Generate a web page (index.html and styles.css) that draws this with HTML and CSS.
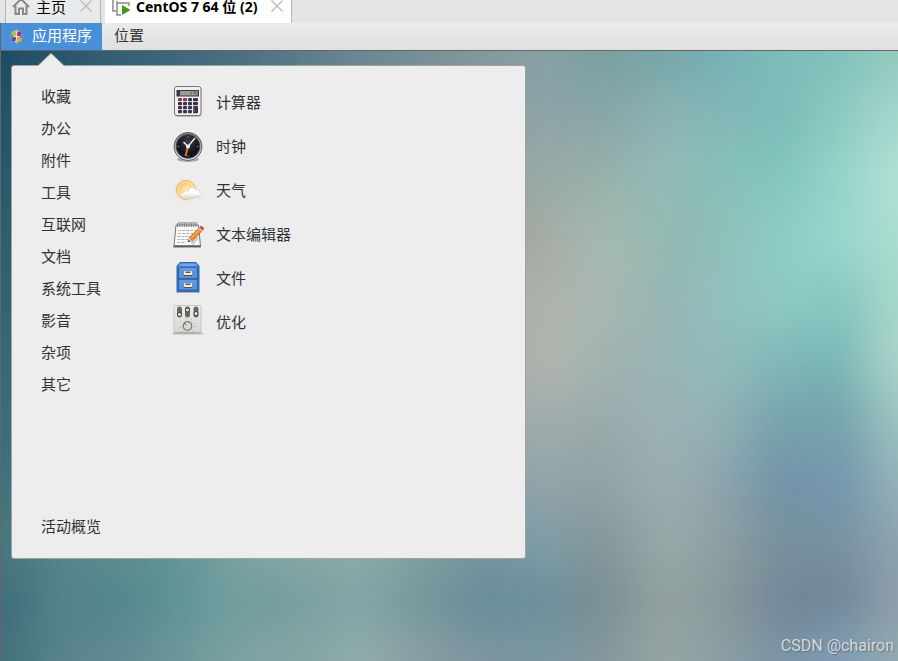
FILE: index.html
```html
<!DOCTYPE html>
<html lang="zh-CN">
<head>
    <meta charset="utf-8">
    <title>CentOS 7 64 位 (2)</title>
    <link rel="stylesheet" href="styles.css">
</head>
<body>
    <div class="tabs">
        <div class="tab">
            <svg class="tabIcon" viewBox="0 0 18 18" fill="none" stroke="#8a8a8c" stroke-width="2">
                <path d="M1 10 L9 2 L17 10 M3.5 8.5 V17 H7 V11.5 H11 V17 H14.5 V8.5"/>
            </svg>
            <span class="tabName">主页</span>
            <button class="tabClose" aria-label="关闭主页">
                <svg viewBox="0 0 12 12" stroke="#bfbfbf" stroke-width="1.5"><path d="M0.5 0.5 L11.5 11.5 M11.5 0.5 L0.5 11.5"/></svg>
            </button>
        </div>
        <div class="tab active">
            <svg class="tabIcon" viewBox="0 0 18 18">
                <path d="M1 0 V12 H4 M5 2 V16 H9 M5 4 H17 V7" fill="none" stroke="#8a8a8c" stroke-width="1.5"/>
                <path d="M10 6 L18.5 11 L10 16 Z" fill="#3f9c12"/>
            </svg>
            <span class="tabName">CentOS 7 64 位 (2)</span>
            <button class="tabClose" aria-label="关闭 CentOS 7">
                <svg viewBox="0 0 12 12" stroke="#bfbfbf" stroke-width="1.5"><path d="M0.5 0.5 L11.5 11.5 M11.5 0.5 L0.5 11.5"/></svg>
            </button>
        </div>
    </div>

    <div class="screen">
        <nav class="panel">
            <button class="panelButton selected">
                <svg class="logo" viewBox="0 0 16 16">
                    <path d="M8 0.5 L10.5 3 H13 V5.5 L15.5 8 L13 10.5 V13 H10.5 L8 15.5 L5.5 13 H3 V10.5 L0.5 8 L3 5.5 V3 H5.5 Z" fill="#e6dff0"/>
                    <path d="M3 3 H7.4 V7.4 H3 Z" fill="#9fcb45"/>
                    <path d="M8.6 3 H13 V7.4 H8.6 Z" fill="#a0307f"/>
                    <path d="M3 8.6 H7.4 V13 H3 Z" fill="#5a4f9c"/>
                    <path d="M8.6 8.6 H13 V13 H8.6 Z" fill="#efa22b"/>
                    <path d="M8 0.5 L9.5 3 L8 6.500 L6.5 3 Z" fill="#e8b53a"/>
                    <path d="M15.5 8 L13 9.5 L9.500 8 L13 6.5 Z" fill="#6d62ad"/>
                    <path d="M8 15.5 L6.5 13 L8 9.500 L9.5 13 Z" fill="#a5d63f"/>
                    <path d="M0.5 8 L3 6.5 L6.500 8 L3 9.5 Z" fill="#b0438b"/>
                    <path d="M8 3.500 V12.500 M3.500 8 H12.500" stroke="#f4eef6" stroke-width=".7"/>
                </svg>
                应用程序
            </button>
            <button class="panelButton">位置</button>
        </nav>

        <main class="desktop">
            <svg class="wallpaper" viewBox="0 51 900 610" preserveAspectRatio="none" aria-hidden="true">
                <defs>
                    <filter id="soft" filterUnits="userSpaceOnUse" x="-60" y="-60" width="1020" height="840">
                        <feGaussianBlur stdDeviation="15 23"/>
                    </filter>
                    <linearGradient id="r1" gradientUnits="userSpaceOnUse" x1="0" x2="900">
                        <stop offset="0" stop-color="#1d4d64"/><stop offset=".13" stop-color="#345f74"/><stop offset=".27" stop-color="#4c6f81"/>
                        <stop offset=".4" stop-color="#6b8792"/><stop offset=".53" stop-color="#81989c"/><stop offset=".6" stop-color="#88a0a6"/>
                        <stop offset=".67" stop-color="#7aa0a2"/><stop offset=".74" stop-color="#78a7a8"/><stop offset=".8" stop-color="#77b0b4"/>
                        <stop offset=".87" stop-color="#7cbcb9"/><stop offset=".94" stop-color="#82c2bc"/><stop offset="1" stop-color="#95cbc0"/>
                    </linearGradient>
                    <linearGradient id="r2" gradientUnits="userSpaceOnUse" x1="0" x2="900">
                        <stop offset="0" stop-color="#225369"/><stop offset=".53" stop-color="#879da1"/><stop offset=".6" stop-color="#8fa4a7"/>
                        <stop offset=".67" stop-color="#8aa5a7"/><stop offset=".74" stop-color="#8db3b5"/><stop offset=".8" stop-color="#83b8b6"/>
                        <stop offset=".87" stop-color="#7bbcb8"/><stop offset=".94" stop-color="#8eccc2"/><stop offset="1" stop-color="#a6d8cd"/>
                    </linearGradient>
                    <linearGradient id="r3" gradientUnits="userSpaceOnUse" x1="0" x2="900">
                        <stop offset="0" stop-color="#27586c"/><stop offset=".6" stop-color="#9aaaa4"/><stop offset=".67" stop-color="#97b1a9"/>
                        <stop offset=".74" stop-color="#93bbb7"/><stop offset=".8" stop-color="#88bfb8"/><stop offset=".87" stop-color="#82c6be"/>
                        <stop offset=".94" stop-color="#98d4ca"/><stop offset="1" stop-color="#b3e2d5"/>
                    </linearGradient>
                    <linearGradient id="r4" gradientUnits="userSpaceOnUse" x1="0" x2="900">
                        <stop offset="0" stop-color="#2c5d70"/><stop offset=".6" stop-color="#a5aba4"/><stop offset=".67" stop-color="#a5b9b1"/>
                        <stop offset=".77" stop-color="#8fbab3"/><stop offset=".87" stop-color="#8dccc5"/><stop offset=".94" stop-color="#98d7ce"/>
                        <stop offset="1" stop-color="#acddd0"/>
                    </linearGradient>
                    <linearGradient id="r5" gradientUnits="userSpaceOnUse" x1="0" x2="900">
                        <stop offset="0" stop-color="#306274"/><stop offset=".6" stop-color="#afb2ab"/><stop offset=".67" stop-color="#a9b8b2"/>
                        <stop offset=".74" stop-color="#97b6b3"/><stop offset=".8" stop-color="#92bfbe"/><stop offset=".87" stop-color="#8ecac4"/>
                        <stop offset=".94" stop-color="#86c7c0"/><stop offset="1" stop-color="#a8d8ca"/>
                    </linearGradient>
                    <linearGradient id="r6" gradientUnits="userSpaceOnUse" x1="0" x2="900">
                        <stop offset="0" stop-color="#356777"/><stop offset=".58" stop-color="#adb1ab"/><stop offset=".63" stop-color="#afb7b0"/>
                        <stop offset=".67" stop-color="#a1b3af"/><stop offset=".74" stop-color="#98b4b4"/><stop offset=".8" stop-color="#92bbbb"/>
                        <stop offset=".87" stop-color="#80b8b7"/><stop offset=".93" stop-color="#76b5b4"/><stop offset="1" stop-color="#aed5cb"/>
                    </linearGradient>
                    <linearGradient id="r7" gradientUnits="userSpaceOnUse" x1="0" x2="900">
                        <stop offset="0" stop-color="#3a6b79"/><stop offset=".6" stop-color="#a1adad"/><stop offset=".67" stop-color="#99aaaa"/>
                        <stop offset=".74" stop-color="#9bb1b5"/><stop offset=".8" stop-color="#93b1b4"/><stop offset=".87" stop-color="#76a2ac"/>
                        <stop offset=".94" stop-color="#75a4ad"/><stop offset="1" stop-color="#9ec5c1"/>
                    </linearGradient>
                    <linearGradient id="r8" gradientUnits="userSpaceOnUse" x1="0" x2="900">
                        <stop offset="0" stop-color="#40707b"/><stop offset=".6" stop-color="#93a5aa"/><stop offset=".67" stop-color="#92a2a4"/>
                        <stop offset=".74" stop-color="#9aafb0"/><stop offset=".8" stop-color="#8ea5ad"/><stop offset=".87" stop-color="#7193a8"/>
                        <stop offset=".94" stop-color="#7598af"/><stop offset="1" stop-color="#97b2b8"/>
                    </linearGradient>
                    <linearGradient id="r9" gradientUnits="userSpaceOnUse" x1="0" x2="900">
                        <stop offset="0" stop-color="#47777f"/><stop offset=".07" stop-color="#57878b"/><stop offset=".2" stop-color="#659596"/>
                        <stop offset=".27" stop-color="#80a5a3"/><stop offset=".4" stop-color="#8fadab"/><stop offset=".47" stop-color="#839e9f"/>
                        <stop offset=".54" stop-color="#7796a0"/><stop offset=".6" stop-color="#809da7"/><stop offset=".67" stop-color="#83979b"/>
                        <stop offset=".74" stop-color="#97a9a7"/><stop offset=".8" stop-color="#8fa0a4"/><stop offset=".87" stop-color="#77909b"/>
                        <stop offset=".94" stop-color="#7892a3"/><stop offset="1" stop-color="#8ea5ae"/>
                    </linearGradient>
                    <linearGradient id="r10" gradientUnits="userSpaceOnUse" x1="0" x2="900">
                        <stop offset="0" stop-color="#3d6b7c"/><stop offset=".07" stop-color="#54838a"/><stop offset=".13" stop-color="#53868a"/>
                        <stop offset=".2" stop-color="#5f9395"/><stop offset=".25" stop-color="#6e9c9f"/><stop offset=".32" stop-color="#769e9d"/>
                        <stop offset=".4" stop-color="#83a5a6"/><stop offset=".47" stop-color="#75969b"/><stop offset=".54" stop-color="#678b98"/>
                        <stop offset=".6" stop-color="#6b8f9b"/><stop offset=".67" stop-color="#788e92"/><stop offset=".74" stop-color="#92a3a0"/>
                        <stop offset=".8" stop-color="#899a9c"/><stop offset=".87" stop-color="#738797"/><stop offset=".93" stop-color="#6e8599"/>
                        <stop offset="1" stop-color="#8e9faa"/>
                    </linearGradient>
                    <linearGradient id="r11" gradientUnits="userSpaceOnUse" x1="0" x2="900">
                        <stop offset="0" stop-color="#41707b"/><stop offset=".07" stop-color="#5a848a"/><stop offset=".13" stop-color="#618a91"/>
                        <stop offset=".2" stop-color="#6c979a"/><stop offset=".27" stop-color="#7fa3a2"/><stop offset=".34" stop-color="#86a5a5"/>
                        <stop offset=".4" stop-color="#92adad"/><stop offset=".47" stop-color="#899ea3"/><stop offset=".54" stop-color="#7c959f"/>
                        <stop offset=".6" stop-color="#7997a1"/><stop offset=".67" stop-color="#83979d"/><stop offset=".74" stop-color="#96a6a4"/>
                        <stop offset=".8" stop-color="#8ba0a3"/><stop offset=".87" stop-color="#7b93a5"/><stop offset=".94" stop-color="#819eb6"/>
                        <stop offset="1" stop-color="#94abae"/>
                    </linearGradient>
                </defs>
                <g filter="url(#soft)">
                    <rect x="-60" y="-60" width="1020" height="150" fill="url(#r1)"/>
                    <rect x="-60" y="90" width="1020" height="60" fill="url(#r2)"/>
                    <rect x="-60" y="150" width="1020" height="60" fill="url(#r3)"/>
                    <rect x="-60" y="210" width="1020" height="60" fill="url(#r4)"/>
                    <rect x="-60" y="270" width="1020" height="60" fill="url(#r5)"/>
                    <rect x="-60" y="330" width="1020" height="60" fill="url(#r6)"/>
                    <rect x="-60" y="390" width="1020" height="60" fill="url(#r7)"/>
                    <rect x="-60" y="450" width="1020" height="60" fill="url(#r8)"/>
                    <rect x="-60" y="510" width="1020" height="60" fill="url(#r9)"/>
                    <rect x="-60" y="570" width="1020" height="60" fill="url(#r10)"/>
                    <rect x="-60" y="630" width="1020" height="150" fill="url(#r11)"/>
                </g>
            </svg>

            <div class="menu">
                <svg class="menuArrow" viewBox="0 0 26 13">
                    <path d="M0 13 L13 0.5 L26 13 Z" fill="#ededed"/>
                    <path d="M0.5 12 L13 0.5 L25.5 12" fill="none" stroke="#b5b9ba"/>
                </svg>
                <div class="categories">
                    <button class="category">收藏</button>
                    <button class="category">办公</button>
                    <button class="category">附件</button>
                    <button class="category">工具</button>
                    <button class="category">互联网</button>
                    <button class="category">文档</button>
                    <button class="category">系统工具</button>
                    <button class="category">影音</button>
                    <button class="category">杂项</button>
                    <button class="category">其它</button>
                    <button class="category overview">活动概览</button>
                </div>
                <div class="apps">
                    <button class="app">
                        <svg class="appIcon" viewBox="0 0 32 32">
                            <rect x="3" y="2" width="26.500" height="30" rx="3" fill="#bdbbb9"/>
                            <rect x="2.500" y="1.500" width="26.500" height="29" rx="2.500" fill="#f3efec" stroke="#85736c"/>
                            <rect x="4.500" y="5" width="22.500" height="6.500" fill="#37364d"/>
                            <rect x="8" y="6" width="18" height="4.500" fill="#9b9e8e"/>
                            <path d="M19 7 V9.500 M21 7 H23 V9.500 M25 7 V9.500" stroke="#55584e" fill="none"/>
                            <g fill="#34334b">
                                <rect x="11" y="13" width="4" height="3.200" rx="1" fill="#863f46"/>
                                <rect x="6" y="13" width="4" height="3.200" rx="1" fill="#863f46"/>
                                <rect x="16" y="13" width="4" height="3.200" rx="1"/>
                                <rect x="21" y="13" width="5" height="3.200" rx="1"/>
                                <rect x="6" y="17" width="4" height="3.200" rx="1"/>
                                <rect x="11" y="17" width="4" height="3.200" rx="1"/>
                                <rect x="16" y="17" width="4" height="3.200" rx="1"/>
                                <rect x="21" y="17" width="5" height="3.200" rx="1"/>
                                <rect x="6" y="21" width="4" height="3.200" rx="1"/>
                                <rect x="11" y="21" width="4" height="3.200" rx="1"/>
                                <rect x="16" y="21" width="4" height="3.200" rx="1"/>
                                <rect x="6" y="25" width="4" height="3.200" rx="1"/>
                                <rect x="11" y="25" width="4" height="3.200" rx="1"/>
                                <rect x="16" y="25" width="4" height="3.200" rx="1"/>
                                <rect x="21" y="21" width="5" height="7.200" rx="1"/>
                            </g>
                            <path d="M22 22 V27" stroke="#77768c"/>
                        </svg>
                        <span>计算器</span>
                    </button>
                    <button class="app">
                        <svg class="appIcon" viewBox="0 0 32 32">
                            <defs>
                                <linearGradient id="rim" x2="0" y2="1"><stop offset="0" stop-color="#777"/><stop offset=".5" stop-color="#aaa"/><stop offset="1" stop-color="#eee"/></linearGradient>
                                <radialGradient id="face" cy=".3"><stop offset="0" stop-color="#3a3c48"/><stop offset="1" stop-color="#101119"/></radialGradient>
                            </defs>
                            <ellipse cx="16" cy="30.500" rx="11" ry="2.500" fill="#a9a9a9"/>
                            <circle cx="16" cy="17.500" r="14" fill="url(#rim)" stroke="#606060"/>
                            <circle cx="16" cy="17.500" r="11.800" fill="url(#face)" stroke="#444"/>
                            <path d="M16 7 V8.500 M26.500 17.500 H25 M16 28 V26.500 M5.500 17.500 H7" stroke="#888"/>
                            <path d="M16 17.500 L13.500 27" stroke="#e4702c" stroke-width="2"/>
                            <path d="M11.500 13 L16 17.500 L23 9" stroke="#eee" stroke-width="1.500" fill="none"/>
                            <circle cx="16" cy="17.500" r="2" fill="#f5f5f5"/>
                        </svg>
                        <span>时钟</span>
                    </button>
                    <button class="app">
                        <svg class="appIcon" viewBox="0 0 32 32">
                            <defs>
                                <radialGradient id="sun" cx=".65" cy=".7" r=".8"><stop offset="0" stop-color="#fff6cf"/><stop offset=".6" stop-color="#fbd98b"/><stop offset="1" stop-color="#f3a94a"/></radialGradient>
                                <linearGradient id="cloud" x2="0" y2="1"><stop offset=".5" stop-color="#fff"/><stop offset="1" stop-color="#d5d5d5"/></linearGradient>
                            </defs>
                            <circle cx="14" cy="17" r="11.500" fill="none" stroke="#f7d6a4" stroke-width="1.500" stroke-dasharray="1.200 3.300"/>
                            <circle cx="14" cy="17" r="9.500" fill="url(#sun)" stroke="#f3b768"/>
                            <circle cx="14" cy="17" r="8" fill="none" stroke="#fff0cc" stroke-width="1"/>
                            <path d="M12 24.500 C8 24.500 8 20 11.500 20 C12 17.500 15 17 16.500 18.500 C16 14.500 22 12.500 24 17 C26 16.500 27.500 18 27 19.500 C32 19.500 32 23 28.500 23 C27 25 24 25 22 24 C20 26 17 26 16 24.500 C15 25.500 13 25.500 12 24.500 Z" fill="url(#cloud)" stroke="#d2cfc6" stroke-width=".6"/>
                        </svg>
                        <span>天气</span>
                    </button>
                    <button class="app">
                        <svg class="appIcon" viewBox="0 0 32 32">
                            <path d="M1 29 H29 V31 H1 Z" fill="#aeaeae"/>
                            <path d="M4 8 H26.500 L28.500 29.500 H2 Z" fill="#fafafa" stroke="#77776f"/>
                            <path d="M2 29 H28.500" stroke="#555" stroke-width="1.500"/>
                            <path d="M6 13.500 H24 M6 16.500 H24 M5.500 19.500 H19 M5.500 22.500 H16 M5 25.500 H14" stroke="#b3b3b3" stroke-dasharray="3 1"/>
                            <path d="M5 8 H26" stroke="#777" stroke-width="4" stroke-dasharray="1 1.300"/>
                            <path d="M6 5.800 H25" stroke="#999"/>
                            <path d="M20 27 L26 20" stroke="#d0cfcb" stroke-width="3"/>
                            <path d="M16 25 L17.500 20.500 L20.500 23.500 Z" fill="#f3dfb8" stroke="#8c5a1e" stroke-width=".6"/>
                            <path d="M16 25 L16.700 22.900 L18.100 24.300 Z" fill="#222"/>
                            <path d="M17.500 20.500 L26.500 11.500 L29.500 14.500 L20.500 23.500 Z" fill="#f28e2c" stroke="#a85a14" stroke-width=".7"/>
                            <path d="M18.500 21.500 L27.500 12.500" stroke="#ffc57e"/>
                            <path d="M26.500 11.500 L27.700 10.300 L30.700 13.300 L29.500 14.500 Z" fill="#c9d0d5"/>
                            <path d="M27.700 10.300 C29 8 33 10.500 30.700 13.300 Z" fill="#df3d45" stroke="#b6333a" stroke-width=".6"/>
                        </svg>
                        <span>文本编辑器</span>
                    </button>
                    <button class="app">
                        <svg class="appIcon" viewBox="0 0 32 32">
                            <path d="M4 31.500 H28" stroke="#b5b5b5"/>
                            <path d="M8 1.500 H24 L27 5 V30.500 H5 V5 Z" fill="#437fc9" stroke="#2c62a9"/>
                            <path d="M8.500 2.500 H23.500 L25.500 5 H6.500 Z" fill="#75a8e4"/>
                            <rect x="6.500" y="7" width="19" height="10.500" fill="#5b93da" stroke="#2c62a9"/>
                            <rect x="6.500" y="19" width="19" height="10" fill="#5b93da" stroke="#2c62a9"/>
                            <path d="M7.500 8 H24.500 M7.500 20 H24.500" stroke="#85b2ea"/>
                            <path d="M12.500 10.500 H19.500 V13.500 H12.500 Z M12.500 22.500 H19.500 V25.500 H12.500 Z" fill="#f2efdf" stroke="#f2efdf"/>
                            <path d="M13.500 11.300 H18.500 M13.500 23.300 H18.500" stroke="#59574f" stroke-width="1.600"/>
                            <path d="M12 14.500 H20 M12 26.500 H20" stroke="#55534c"/>
                        </svg>
                        <span>文件</span>
                    </button>
                    <button class="app">
                        <svg class="appIcon" viewBox="0 0 32 32">
                            <defs>
                                <linearGradient id="box" x2="0" y2="1"><stop offset="0" stop-color="#efefed"/><stop offset="1" stop-color="#d5d5d0"/></linearGradient>
                            </defs>
                            <path d="M0.500 28.500 H31" stroke="#c8c8c5" stroke-width="2"/>
                            <rect x="2" y="0.500" width="27" height="27.500" rx="1.500" fill="url(#box)" stroke="#c4c4c0"/>
                            <path d="M2.500 28 H28.500" stroke="#999994"/>
                            <g fill="#666864">
                                <rect x="5" y="1.500" width="5" height="11" rx="2.500"/>
                                <rect x="13" y="1.500" width="5" height="11" rx="2.500"/>
                                <rect x="21.500" y="1.500" width="5" height="11" rx="2.500"/>
                            </g>
                            <g fill="#f7f7f7" stroke="#222" stroke-width=".8">
                                <circle cx="7.500" cy="9.500" r="1.900"/>
                                <circle cx="15.500" cy="5" r="1.900"/>
                                <circle cx="24" cy="8.500" r="1.900"/>
                            </g>
                            <circle cx="15.500" cy="21" r="7.500" fill="none" stroke="#999b96" stroke-dasharray="1 4.500"/>
                            <circle cx="15.500" cy="21" r="4.300" fill="#d6d6d2" stroke="#7a7c77" stroke-width="1.300"/>
                            <path d="M12 18 L14 20" stroke="#555752"/>
                        </svg>
                        <span>优化</span>
                    </button>
                </div>
            </div>

            <span class="watermark">CSDN @chairon</span>
        </main>
    </div>
</body>
</html>
```
FILE: styles.css
```css
* {
    box-sizing: border-box;
}

body {
    margin: 0;
    min-height: 100vh;
    display: flex;
    flex-direction: column;
    overflow: hidden;
    font-family: "Noto Sans", "Noto Sans CJK SC", sans-serif;
    font-size: 15px;
    color: #2e3436;
}

button {
    border: none;
    padding: 0;
    background: none;
    font-family: "Noto Sans CJK SC", sans-serif;
    font-size: 15px;
    color: inherit;
    text-align: left;
    cursor: pointer;
}

svg {
    display: block;
    overflow: visible;
}

/* window tabs */
.tabs {
    display: flex;
    gap: 4px;
    height: 23px;
    padding-left: 5px;
    background: #e3e4e6;
}

.tab {
    display: flex;
    align-items: flex-start;
    padding: 0 8px 0 6px;
    border: solid #b4b5b8;
    border-width: 0 1px;
    background: #e9eaec;
    color: #000;
    line-height: 14px;
}

.tab.active {
    background: #fff;
    border-left-color: #fff;
    font-size: 14px;
    font-weight: bold;
}

.tabIcon {
    width: 18px;
    height: 18px;
    margin-right: 6px;
    margin-top: -3px;
}

.active .tabIcon {
    margin-top: -1px;
}

.tabClose {
    width: 12px;
    height: 12px;
    margin-left: 14px;
}

/* guest screen */
.screen {
    flex: 1;
    display: flex;
    flex-direction: column;
    border-left: 1px solid #666;
}

.panel {
    display: flex;
    height: 28px;
    border-bottom: 1px solid #666;
    background: linear-gradient(#ebebeb, #e0e0e0);
}

.panelButton {
    display: flex;
    align-items: center;
    gap: 8px;
    padding: 0 12px 5px;
}

.panelButton.selected {
    padding: 0 10px 5px 8px;
    background: #4a90d9;
    color: #fff;
}

.logo {
    width: 15px;
    height: 15px;
    margin-top: 4px;
}

.desktop {
    flex: 1;
    position: relative;
    padding: 14px 10px;
}

.wallpaper {
    position: absolute;
    left: 0;
    top: 0;
    width: 100%;
    height: 100%;
    overflow: hidden;
}

/* applications menu */
.menu {
    position: relative;
    display: flex;
    width: 515px;
    max-width: 100%;
    min-height: 494px;
    padding: 13px 0 17px;
    border: 1px solid #a1a1a1;
    border-radius: 3px;
    background: #ededed;
}

.menuArrow {
    position: absolute;
    left: 26px;
    top: -13px;
    width: 26px;
    height: 13px;
}

.categories {
    display: flex;
    flex-direction: column;
    width: 160px;
}

.category {
    height: 32px;
    padding-left: 29px;
}

.category.overview {
    margin-top: auto;
}

.apps {
    flex: 1;
    display: flex;
    flex-direction: column;
}

.app {
    display: flex;
    align-items: center;
    gap: 12px;
    height: 44px;
}

.appIcon {
    width: 32px;
    height: 32px;
}

.category:hover,
.app:hover {
    background: #dcdcdc;
}

.watermark {
    position: absolute;
    right: 4px;
    bottom: 5px;
    font-family: Roboto, sans-serif;
    font-size: 16px;
    line-height: 20px;
    color: #d3dade;
    text-shadow: 1px 1px 1px #5d6f7c;
}
```
